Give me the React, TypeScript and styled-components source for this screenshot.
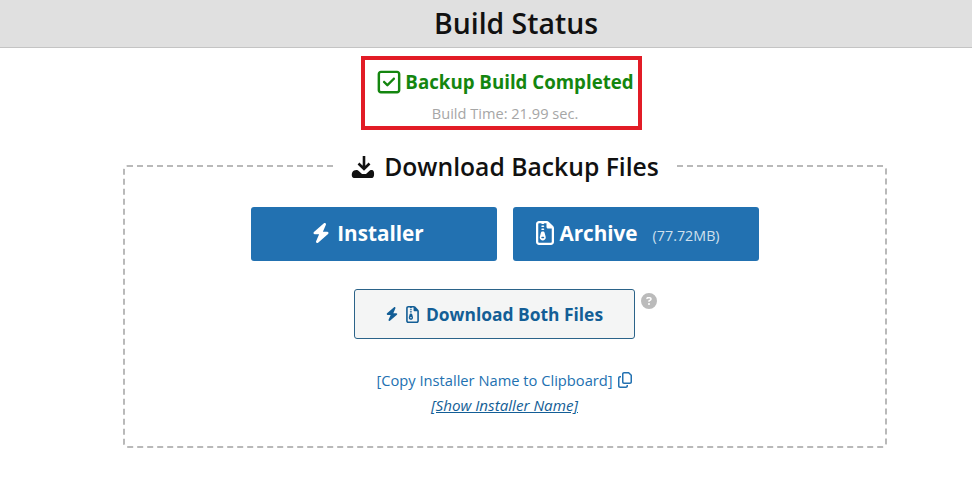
import React from 'react';
import styled, { createGlobalStyle } from 'styled-components';
import { FaBolt, FaRegSquareCheck, FaRegCopy, FaRegFileZipper, FaCircleQuestion } from 'react-icons/fa6';

const GlobalStyle = createGlobalStyle`
  html, body {
    margin: 0;
    padding: 0;
    background: #fff;
  }
  body {
    font-family: "Open Sans", "Noto Sans", "Liberation Sans", sans-serif;
  }
`;

const Page = styled.div`
  width: 972px;
  height: 482px;
  overflow: hidden;
`;

const Header = styled.h1`
  box-sizing: border-box;
  width: 100%;
  height: 48px;
  margin: 0;
  padding-left: 60px;
  background: #e0e0e0;
  border-bottom: 1px solid #c4c4c4;
  color: #111;
  font-size: 28.4px;
  font-weight: 600;
  line-height: 46px;
  text-align: center;
`;

const Content = styled.main`
  padding-left: 37px;
  display: flex;
  flex-direction: column;
  align-items: center;
`;

const StatusBox = styled.div`
  box-sizing: border-box;
  width: 281px;
  height: 74px;
  margin: 8px 7px 0 0;
  padding-left: 8px;
  border: 4px solid #e21c26;
  display: flex;
  flex-direction: column;
  align-items: center;
`;

const StatusTitle = styled.div`
  display: flex;
  align-items: center;
  gap: 3px;
  margin-top: 7px;
  color: #14860f;
  font-size: 18.7px;
  font-weight: 700;
  line-height: 30px;
  white-space: nowrap;
`;

const BuildTime = styled.div`
  margin-top: 6px;
  color: #a6a6a6;
  font-size: 14.6px;
  font-weight: 500;
  line-height: 20px;
`;

const DownloadBox = styled.fieldset`
  box-sizing: border-box;
  width: 764px;
  height: 300px;
  margin: 18px 0 0;
  padding: 0;
  border: 2px dashed #b9b9b9;
  border-radius: 4px;
  display: flex;
  flex-direction: column;
  align-items: center;
`;

const DownloadLegend = styled.legend`
  margin: 0 auto;
  padding: 2px 17px 0;
  display: flex;
  align-items: center;
  gap: 8px;
  color: #111;
  font-size: 24.7px;
  font-weight: 600;
  line-height: 34px;
`;

const ButtonRow = styled.div`
  display: flex;
  gap: 16px;
  margin-top: 23px;
`;

const PrimaryButton = styled.a<{ $shift: number; $gap: number }>`
  box-sizing: border-box;
  width: 246px;
  height: 54px;
  padding: 0 ${(p) => p.$shift}px 3px 0;
  display: flex;
  align-items: center;
  justify-content: center;
  gap: ${(p) => p.$gap}px;
  background: #2271b1;
  border-radius: 3px;
  color: #fff;
  font-size: 20.7px;
  font-weight: 700;
`;

const FileSize = styled.small`
  margin-left: 13px;
  margin-top: 5px;
  color: #cfe0ee;
  font-size: 14.3px;
  font-weight: 400;
`;

const BothRow = styled.div`
  position: relative;
  margin: 28px 20px 0 0;
`;

const BothButton = styled.a`
  box-sizing: border-box;
  width: 281px;
  height: 50px;
  padding-right: 1px;
  display: flex;
  align-items: center;
  justify-content: center;
  gap: 5px;
  background: #f4f5f5;
  border: 1.5px solid #2b6389;
  border-radius: 3px;
  color: #135e96;
  font-size: 17.4px;
  font-weight: 700;
`;

const HelpIcon = styled(FaCircleQuestion)`
  position: absolute;
  top: 4px;
  left: 287px;
  color: #bbb;
`;

const CopyLink = styled.div`
  display: flex;
  align-items: center;
  gap: 4px;
  margin-top: 30px;
  color: #2271b1;
  font-size: 14.7px;
  line-height: 22px;
`;

const ShowLink = styled.a`
  margin-top: 3px;
  color: #135e96;
  font-size: 15.2px;
  font-style: italic;
  line-height: 22px;
  text-decoration: underline;
`;

function TrayDownloadIcon() {
  return (
    <svg width="26" height="26" viewBox="0 0 26 26" fill="none">
      <path d="M14 2v12M8.5 9.5l5.5 5.5 5.5-5.5" stroke="#111" strokeWidth="2.6" />
      <path
        d="M4 16.5c2-1 4-.5 5 .8l3 2.7h4l3-2.7c1-1.3 3-1.5 4-.8 1.6 1 1.6 7.5-1 7.5H4c-3 0-3-6.2 0-7.5z"
        fill="#111"
      />
    </svg>
  );
}

export default function App() {
  return (
    <Page>
      <GlobalStyle />
      <Header>Build Status</Header>
      <Content>
        <StatusBox>
          <StatusTitle>
            <FaRegSquareCheck size={26} />
            Backup Build Completed
          </StatusTitle>
          <BuildTime>Build Time: 21.99 sec.</BuildTime>
        </StatusBox>
        <DownloadBox>
          <DownloadLegend>
            <TrayDownloadIcon />
            Download Backup Files
          </DownloadLegend>
          <ButtonRow>
            <PrimaryButton $shift={12} $gap={6}>
              <FaBolt size={20} />
              Installer
            </PrimaryButton>
            <PrimaryButton $shift={18} $gap={2}>
              <FaRegFileZipper size={24} />
              Archive
              <FileSize>(77.72MB)</FileSize>
            </PrimaryButton>
          </ButtonRow>
          <BothRow>
            <BothButton>
              <FaBolt size={14} />
              <FaRegFileZipper size={17} />
              Download Both Files
            </BothButton>
            <HelpIcon size={16} />
          </BothRow>
          <CopyLink>
            [Copy Installer Name to Clipboard]
            <FaRegCopy size={16} />
          </CopyLink>
          <ShowLink>[Show Installer Name]</ShowLink>
        </DownloadBox>
      </Content>
    </Page>
  );
}
